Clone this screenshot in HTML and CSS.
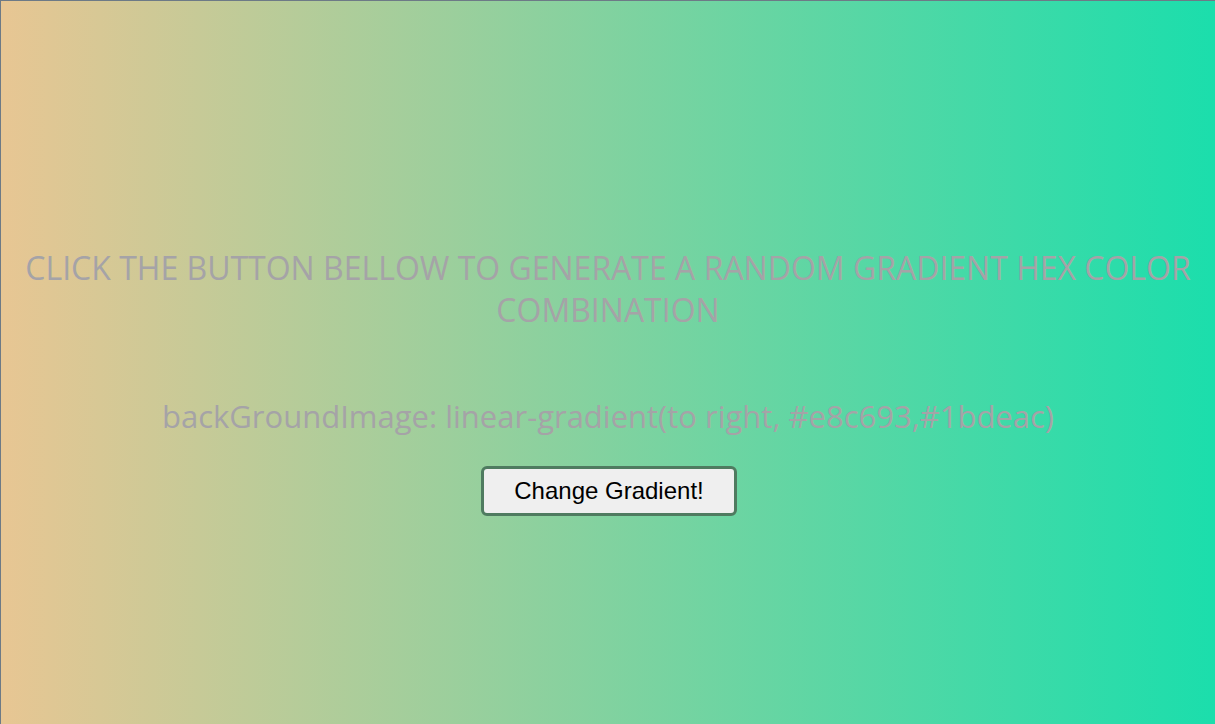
FILE: index.html
```html
<!DOCTYPE html>
<html lang="en">
<head>
<meta charset="utf-8">
<title>Gradient Generator</title>
<link rel="stylesheet" href="styles.css">
</head>
<body>
<div class="edge-mark"></div>
<main class="page">
  <h1 class="title">Click the button bellow to generate a random gradient hex color combination</h1>
  <h2 class="code">backGroundImage: linear-gradient(to right, #e8c693,#1bdeac)</h2>
  <button class="btn" type="button">Change Gradient!</button>
</main>
</body>
</html>
```
FILE: styles.css
```css
html, body {
  margin: 0;
  height: 100%;
}
body {
  background-image: linear-gradient(to right, #e8c693, #1bdeac);
  border-top: 1px solid #6d7a86;
  border-left: 1px solid #6d7a86;
  box-sizing: border-box;
  font-family: "Open Sans", "Noto Sans", sans-serif;
  position: relative;
}
.edge-mark {
  position: absolute;
  left: -1px;
  top: 127px;
  width: 1px;
  height: 278px;
  background: #8c2a38;
  z-index: 2;
}
.page {
  display: flex;
  flex-direction: column;
  align-items: center;
  padding: 246px 10px 0 10px;
  text-align: center;
}
.title {
  margin: 0;
  font-size: 32px;
  font-weight: 400;
  line-height: 42px;
  text-transform: uppercase;
  color: #a5a3a7;
}
.code {
  margin: 64px 0 0 0;
  font-size: 31px;
  font-weight: 400;
  line-height: 42px;
  color: #a5a3a7;
}
.btn {
  margin-top: 29px;
  margin-left: 2px;
  width: 256px;
  height: 50px;
  font-family: "Liberation Sans", Arial, sans-serif;
  font-size: 24px;
  color: #000;
  background: #efefef;
  border: 3px solid #4f7b60;
  border-radius: 6px;
  padding: 0;
}
```
